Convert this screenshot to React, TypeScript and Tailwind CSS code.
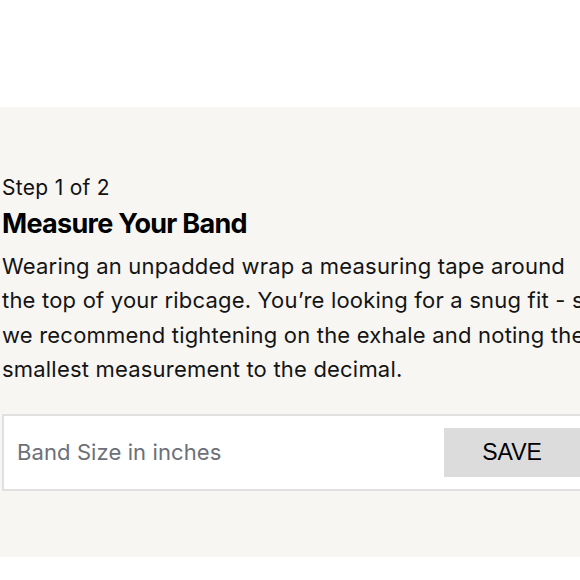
export default function App() {
  return (
    <div className="w-[580px] h-[580px] overflow-hidden bg-white font-['Inter',sans-serif]">
      <div className="mt-[107px] h-[450px] bg-[#f7f6f3] pl-[2px] pt-[67px]">
        <div className="w-[597px]">
          <p className="text-[21px] leading-[28px] text-[#111] tracking-[0.3px]">Step 1 of 2</p>
          <h1 className="mt-[5px] text-[27px] leading-[34px] font-bold text-black tracking-[-0.7px]">Measure Your Band</h1>
          <p className="mt-[8px] text-[22px] leading-[34.3px] text-[#141414] tracking-[0.2px]">
            Wearing an unpadded wrap a measuring tape around the top of your ribcage. You’re looking for a snug fit - so we recommend tightening on the exhale and noting the smallest measurement to the decimal.
          </p>
          <div className="mt-[28px] w-[592px] flex items-center h-[77px] bg-white border-2 border-[#e0e0e0] pl-[13px] pr-[12px]">
            <input
              className="flex-1 outline-none text-[22px] text-[#333] placeholder:text-[#6b7079] bg-transparent tracking-[0.1px]"
              placeholder="Band Size in inches"
            />
            <button className="w-[136px] h-[49px] bg-[#dcdcdc] text-[23px] text-black font-['Liberation_Sans',sans-serif]">
              SAVE
            </button>
          </div>
        </div>
      </div>
    </div>
  )
}
